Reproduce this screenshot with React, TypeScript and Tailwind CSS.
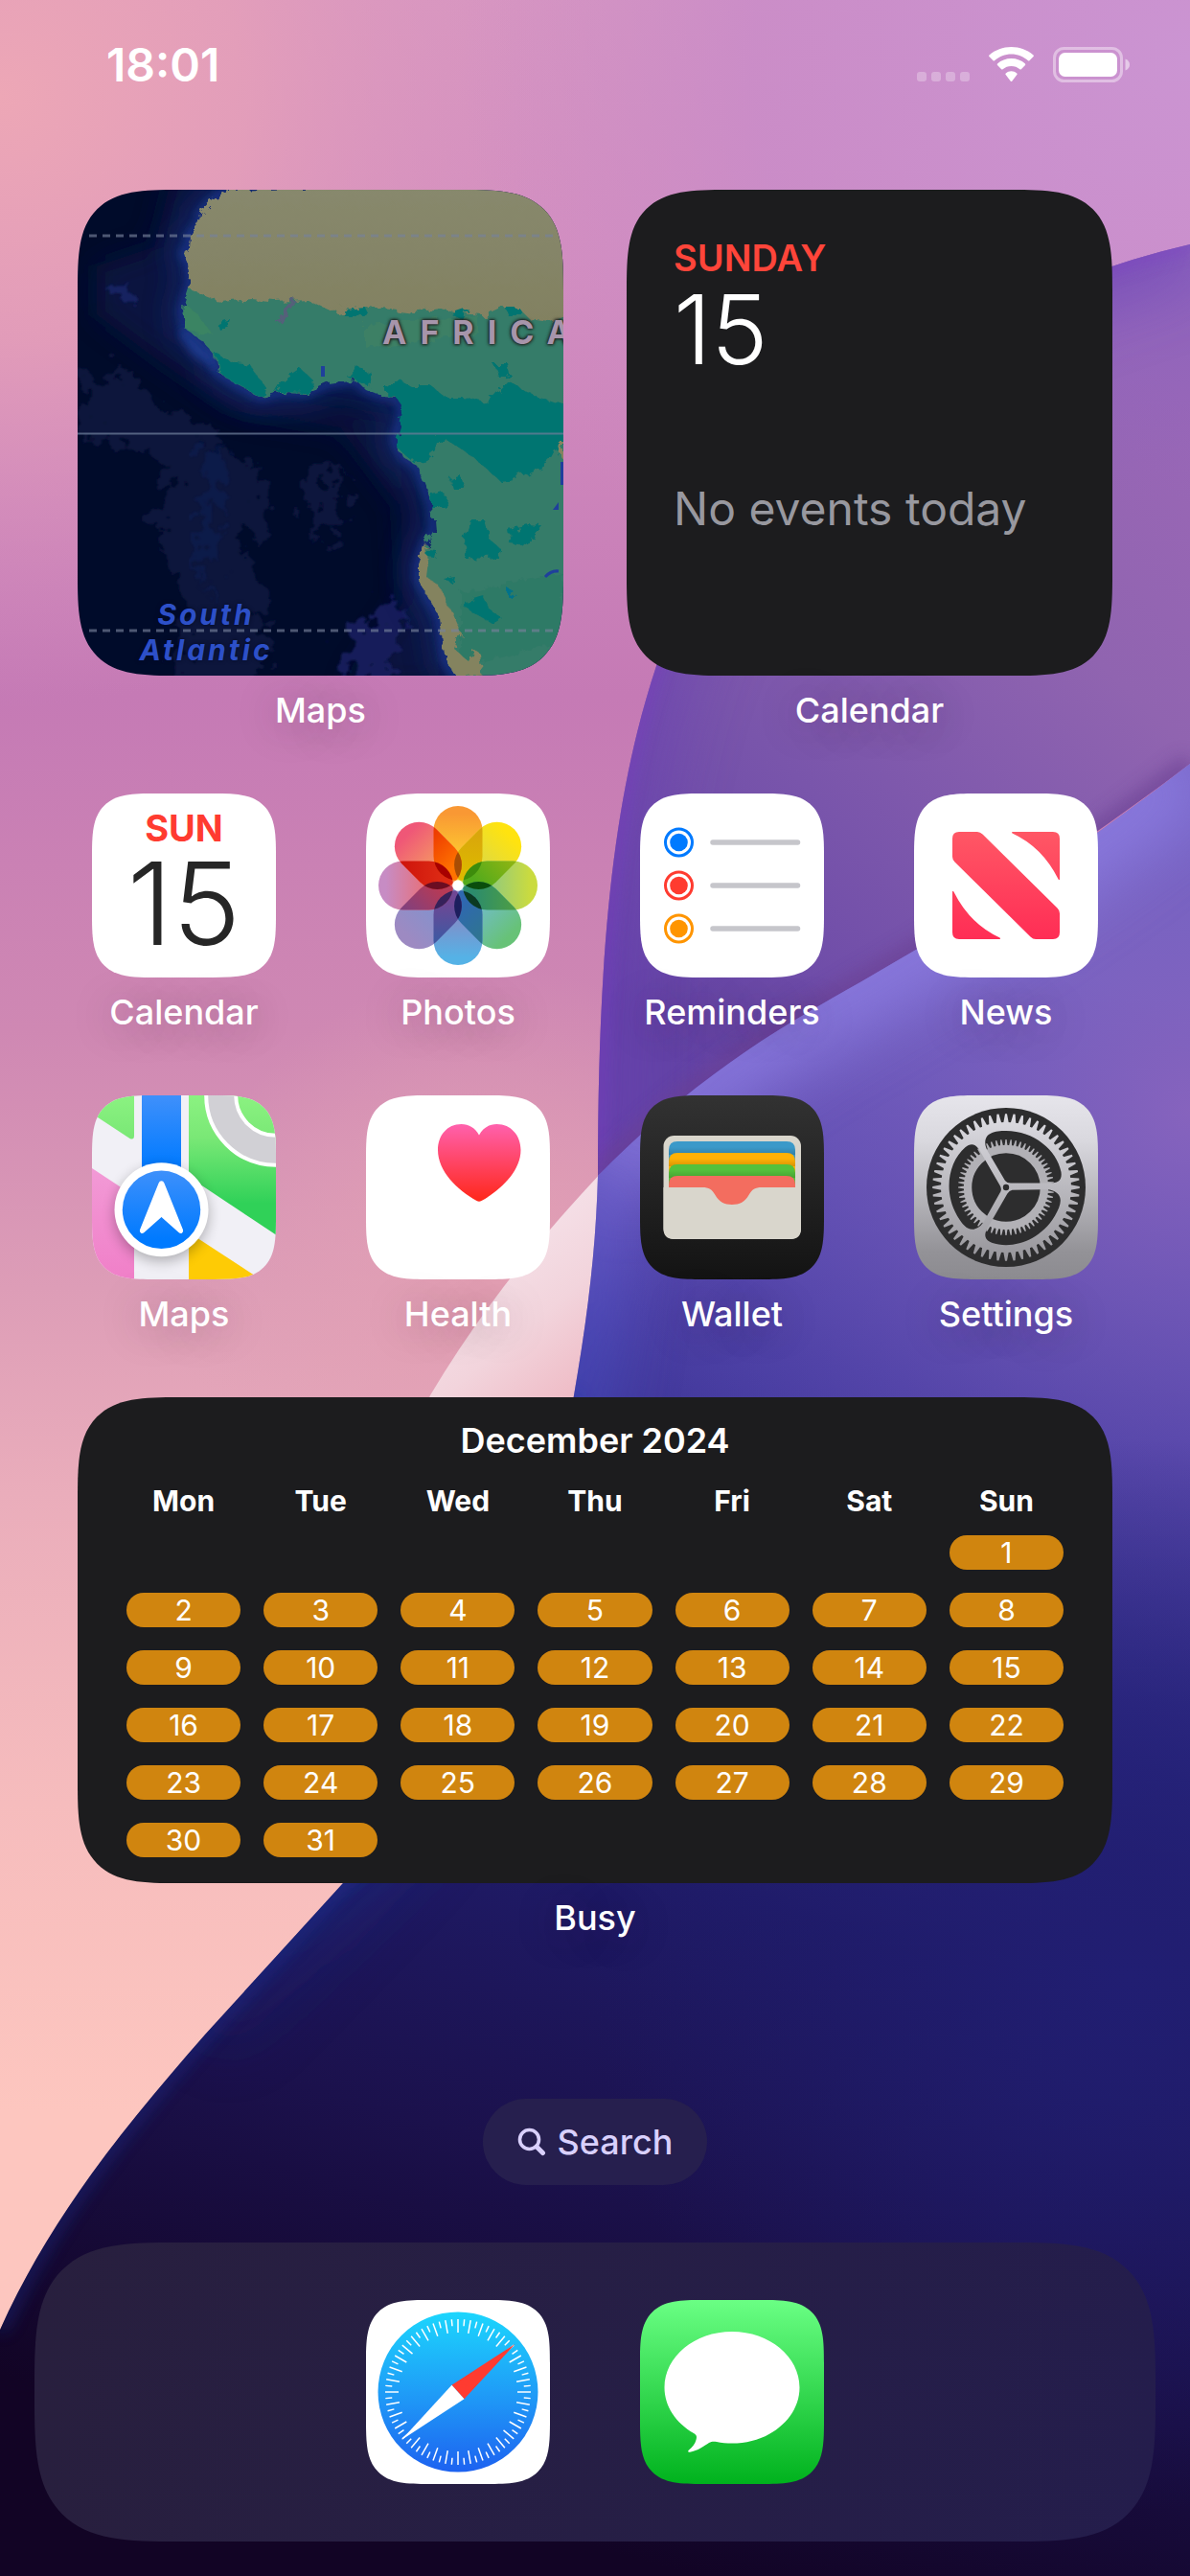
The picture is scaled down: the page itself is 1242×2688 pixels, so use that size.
import React from "react";

const FONT = "font-[Inter,'Liberation_Sans',sans-serif]";

const WEEKDAYS = ["Mon", "Tue", "Wed", "Thu", "Fri", "Sat", "Sun"];

const WEEKS: (number | null)[][] = [
  [null, null, null, null, null, null, 1],
  [2, 3, 4, 5, 6, 7, 8],
  [9, 10, 11, 12, 13, 14, 15],
  [16, 17, 18, 19, 20, 21, 22],
  [23, 24, 25, 26, 27, 28, 29],
  [30, 31, null, null, null, null, null],
];

function range(n: number) {
  return Array.from({ length: n }, (_, i) => i);
}

/* ---------- Wallpaper ---------- */

function Wallpaper() {
  return (
    <svg
      aria-hidden="true"
      className="absolute inset-0 h-full w-full"
      viewBox="0 0 1242 2688"
      preserveAspectRatio="none"
    >
      <defs>
        <linearGradient id="wpBase" x1="0" y1="0" x2="0" y2="1">
          <stop offset="0" stopColor="#d797c2" />
          <stop offset="0.1" stopColor="#d38ec0" />
          <stop offset="0.27" stopColor="#c57ab5" />
          <stop offset="0.4" stopColor="#cf88b3" />
          <stop offset="0.5" stopColor="#dd9db7" />
          <stop offset="0.58" stopColor="#eaadbb" />
          <stop offset="0.7" stopColor="#f6bcbd" />
          <stop offset="0.82" stopColor="#fdc6bf" />
        </linearGradient>
        <radialGradient id="wpPinkTop" gradientUnits="userSpaceOnUse" cx="0" cy="100" r="640">
          <stop offset="0" stopColor="#eda7b6" />
          <stop offset="0.4" stopColor="#e6a0b8" stopOpacity="0.8" />
          <stop offset="1" stopColor="#d38ec0" stopOpacity="0" />
        </radialGradient>
        <radialGradient id="wpLilac" gradientUnits="userSpaceOnUse" cx="1242" cy="60" r="760">
          <stop offset="0" stopColor="#cb94d2" />
          <stop offset="0.6" stopColor="#c88bc9" stopOpacity="0.8" />
          <stop offset="1" stopColor="#ca8ac4" stopOpacity="0" />
        </radialGradient>
        <radialGradient id="wpRose" gradientUnits="userSpaceOnUse" cx="520" cy="1340" r="330">
          <stop offset="0" stopColor="#e39fb3" />
          <stop offset="1" stopColor="#e0a0b5" stopOpacity="0" />
        </radialGradient>
        <linearGradient id="wpPurple" gradientUnits="userSpaceOnUse" x1="640" y1="1050" x2="1242" y2="420">
          <stop offset="0" stopColor="#6343a6" />
          <stop offset="0.35" stopColor="#7955ab" />
          <stop offset="0.7" stopColor="#9064b0" />
          <stop offset="1" stopColor="#9a67b6" />
        </linearGradient>
        <linearGradient id="wpPurpleTop" gradientUnits="userSpaceOnUse" x1="0" y1="240" x2="0" y2="520">
          <stop offset="0" stopColor="#8962c0" />
          <stop offset="1" stopColor="#9266bc" stopOpacity="0" />
        </linearGradient>
        <linearGradient id="wpWhite" gradientUnits="userSpaceOnUse" x1="480" y1="1300" x2="620" y2="1470">
          <stop offset="0" stopColor="#f6e4eb" />
          <stop offset="0.5" stopColor="#f2d4dc" />
          <stop offset="1" stopColor="#eeb5c0" />
        </linearGradient>
        <linearGradient id="wpBlue" gradientUnits="userSpaceOnUse" x1="900" y1="950" x2="420" y2="2600">
          <stop offset="0" stopColor="#8274d4" />
          <stop offset="0.12" stopColor="#6b58bc" />
          <stop offset="0.27" stopColor="#4b3fa4" />
          <stop offset="0.45" stopColor="#2d2a88" />
          <stop offset="0.6" stopColor="#1f1b68" />
          <stop offset="0.78" stopColor="#1b114c" />
          <stop offset="1" stopColor="#120425" />
        </linearGradient>
        <radialGradient id="wpMauve" gradientUnits="userSpaceOnUse" cx="1242" cy="1160" r="620">
          <stop offset="0" stopColor="#8763bd" stopOpacity="0.95" />
          <stop offset="0.5" stopColor="#6d55b4" stopOpacity="0.5" />
          <stop offset="1" stopColor="#5a4ab0" stopOpacity="0" />
        </radialGradient>
        <radialGradient id="wpNavy" gradientUnits="userSpaceOnUse" cx="1180" cy="2060" r="560">
          <stop offset="0" stopColor="#211e72" />
          <stop offset="1" stopColor="#1f1b68" stopOpacity="0" />
        </radialGradient>
        <linearGradient id="wpEdge" gradientUnits="userSpaceOnUse" x1="0" y1="1227" x2="0" y2="2123">
          <stop offset="0" stopColor="#7d70e2" />
          <stop offset="0.2" stopColor="#4a4fc4" />
          <stop offset="0.55" stopColor="#2440a4" />
          <stop offset="1" stopColor="#1c2f88" stopOpacity="0.3" />
        </linearGradient>
        <clipPath id="wpPurpleClip">
          <path d="M1242 255 C960 320 735 520 685 695 C640 830 624 990 624 1227 C760 1100 1000 980 1242 797 Z" />
        </clipPath>
        <clipPath id="wpBlueClip">
          <path d="M1242 797 C1090 915 985 975 854 1050 C760 1104 690 1160 624 1227 C622 1300 614 1370 599 1456 C560 1690 470 1850 358 1965 L214 2123 C120 2230 50 2320 0 2431 L0 2688 L1242 2688 Z" />
        </clipPath>
        <filter id="wpBlurS" x="-20%" y="-20%" width="140%" height="140%">
          <feGaussianBlur stdDeviation="9" />
        </filter>
        <filter id="wpBlurL" x="-30%" y="-30%" width="160%" height="160%">
          <feGaussianBlur stdDeviation="34" />
        </filter>
      </defs>
      <rect width="1242" height="2688" fill="url(#wpBase)" />
      <rect width="1242" height="900" fill="url(#wpPinkTop)" />
      <rect width="1242" height="900" fill="url(#wpLilac)" />
      <rect y="900" width="860" height="900" fill="url(#wpRose)" />
      <path
        d="M630 1221 C560 1295 500 1370 449 1456 L380 1620 L600 1620 L640 1400 Z"
        fill="url(#wpWhite)"
      />
      <g clipPath="url(#wpPurpleClip)">
        <rect x="560" y="200" width="700" height="1060" fill="url(#wpPurple)" />
        <rect x="560" y="200" width="700" height="400" fill="url(#wpPurpleTop)" />
        <path
          d="M1242 255 C960 320 735 520 685 695 C640 830 624 990 624 1227"
          fill="none"
          stroke="#6a41b4"
          strokeWidth="70"
          opacity="0.55"
          filter="url(#wpBlurL)"
        />
        <path
          d="M1242 255 C960 320 735 520 685 695 C640 830 624 990 624 1227"
          fill="none"
          stroke="#7d3cc4"
          strokeWidth="10"
          opacity="0.7"
          filter="url(#wpBlurS)"
        />
        <path
          d="M1242 797 C1090 915 985 975 854 1050 C760 1104 690 1160 624 1227"
          fill="none"
          stroke="#6b3f92"
          strokeWidth="22"
          opacity="0.65"
          filter="url(#wpBlurS)"
        />
      </g>
      <g clipPath="url(#wpBlueClip)">
        <rect y="780" width="1242" height="1908" fill="url(#wpBlue)" />
        <rect y="780" width="1242" height="1908" fill="url(#wpMauve)" />
        <rect y="780" width="1242" height="1908" fill="url(#wpNavy)" />
        <path
          d="M1242 797 C1090 915 985 975 854 1050 C760 1104 690 1160 624 1227"
          fill="none"
          stroke="#9080e6"
          strokeWidth="90"
          opacity="0.75"
          filter="url(#wpBlurL)"
        />
        <path
          d="M624 1227 C622 1300 614 1370 599 1456 C560 1690 470 1850 358 1965 L214 2123"
          fill="none"
          stroke="url(#wpEdge)"
          strokeWidth="70"
          opacity="0.65"
          filter="url(#wpBlurL)"
        />
        <path
          d="M599 1456 C560 1690 470 1850 358 1965 L214 2123 C120 2230 50 2320 0 2431"
          fill="none"
          stroke="#1c3aa8"
          strokeWidth="9"
          opacity="0.6"
          filter="url(#wpBlurS)"
        />
      </g>
    </svg>
  );
}

/* ---------- Status bar ---------- */

function StatusBar() {
  return (
    <header className="flex h-[136px] items-center justify-between pr-[63px] pl-[111px] text-white">
      <time className="text-[48px] leading-[64px] font-semibold">18:01</time>
      <svg width="222" height="38" viewBox="0 0 222 38" role="img" aria-label="No signal, Wi-Fi connected, battery full">
        {range(4).map((i) => (
          <rect key={i} x={i * 15} y="26" width="10" height="10" rx="3" fill="#fff" fillOpacity="0.28" />
        ))}
        <path
          fill="#fff"
          d="M98.500 7.600C105.100 7.600 111.200 10.100 116 14.300C116.400 14.700 117 14.700 117.400 14.300L121.600 10C122 9.600 122 8.900 121.500 8.500C115.300 3 107.300 0 98.500 0C89.800 0 81.700 3 75.500 8.500C75 8.900 75 9.600 75.400 10L79.600 14.300C80 14.700 80.600 14.700 81 14.300C85.800 10.100 91.900 7.600 98.500 7.600Z"
        />
        <path
          fill="#fff"
          d="M98.500 20C101.900 20 105 21.200 107.400 23.300C107.800 23.700 108.400 23.700 108.800 23.300L113 19C113.400 18.600 113.400 17.900 113 17.500C109 14 104 12.100 98.500 12.100C93 12.100 88 14 84 17.500C83.600 17.900 83.600 18.600 84 19L88.200 23.300C88.600 23.700 89.200 23.700 89.600 23.300C92 21.200 95.100 20 98.500 20Z"
        />
        <path
          fill="#fff"
          d="M104.700 28.100C104.700 28.400 104.600 28.700 104.300 28.900L99.200 35.800C98.800 36.200 98.200 36.200 97.800 35.800L92.700 28.900C92.300 28.500 92.300 27.800 92.800 27.400C94.400 26.100 96.400 25.300 98.500 25.300C100.600 25.300 102.600 26.100 104.200 27.400C104.500 27.600 104.700 27.900 104.700 28.100Z"
        />
        <rect x="143.500" y="1.500" width="70" height="34" rx="10" fill="none" stroke="#fff" strokeOpacity="0.42" strokeWidth="3" />
        <rect x="148" y="6" width="61" height="25" rx="6.500" fill="#fff" />
        <path d="M217.500 12.500C220.500 13.600 222 15.800 222 18.500C222 21.200 220.500 23.400 217.500 24.500Z" fill="#fff" fillOpacity="0.5" />
      </svg>
    </header>
  );
}

/* ---------- Widgets ---------- */

const WIDGET_SHAPE =
  "overflow-hidden rounded-[70px] supports-[corner-shape:squircle]:rounded-[106px] [corner-shape:superellipse(1.7)]";

function Label({ children }: { children: React.ReactNode }) {
  return (
    <span className="block text-center text-[36px] leading-[48px] font-medium whitespace-nowrap text-white [text-shadow:0_4px_40px_rgba(60,30,60,0.35)]">
      {children}
    </span>
  );
}

const LAND =
  "M156 0L141 11L129 24L128 36L117 47L116 60L110 66L116 78L118 97L109 125L112 145L129 156L143 173L145 189L168 204L191 216L211 211L238 212L261 202L290 198L300 208L315 214L331 215L340 227L336 246L331 261L338 277L354 288L363 311L370 330L372 355L363 370L356 391L356 407L366 426L378 447L381 472L384 491L394 507L520 520L520 -10Z";

function MapArtwork() {
  return (
    <svg aria-hidden="true" className="block h-full w-full" viewBox="0 0 507 507">
      <defs>
        <filter id="mapRough" x="-5%" y="-5%" width="110%" height="110%">
          <feTurbulence type="fractalNoise" baseFrequency="0.09" numOctaves="3" seed="4" />
          <feDisplacementMap in="SourceGraphic" scale="13" />
        </filter>
        <filter id="mapShard" x="-10%" y="-10%" width="120%" height="120%">
          <feTurbulence type="fractalNoise" baseFrequency="0.06" numOctaves="4" seed="11" />
          <feDisplacementMap in="SourceGraphic" scale="60" />
          <feGaussianBlur stdDeviation="1.2" />
        </filter>
        <filter id="mapBlur" x="-30%" y="-30%" width="160%" height="160%">
          <feGaussianBlur stdDeviation="14" />
        </filter>
        <filter id="mapBlurS" x="-20%" y="-20%" width="140%" height="140%">
          <feGaussianBlur stdDeviation="5" />
        </filter>
        <linearGradient id="mapDesert" x1="0" y1="0" x2="0" y2="1">
          <stop offset="0" stopColor="#88896e" />
          <stop offset="1" stopColor="#828161" />
        </linearGradient>
        <clipPath id="mapLandClip">
          <path d={LAND} />
        </clipPath>
      </defs>
      <rect width="507" height="507" fill="#000b2a" />
      <path d="M100 -20L170 -20L120 60L110 130L200 215L330 235L350 300L370 400L390 520L280 520L340 430L335 330L275 250L160 230L80 175L20 130L20 80L80 60Z" fill="#0f1643" opacity="0.9" filter="url(#mapBlur)" />
      <g filter="url(#mapShard)" fill="#0f153e">
        <path d="M10 200L60 190L80 225L150 250L130 270L190 285L200 340L170 380L200 420L190 520L100 520L110 430L80 350L100 290L60 270L0 260Z" opacity="0.9" />
        <path d="M240 300L280 290L275 350L245 370Z" />
        <path d="M35 98L60 100L58 120L40 116Z" fill="#122060" />
        <path d="M290 450L340 430L330 507L280 520Z" fill="#141b5a" />
      </g>
      <g filter="url(#mapShard)" fill="#11205a" opacity="0.45">
        <path d="M135 260L160 270L150 330L130 420L120 380L130 320Z" />
      </g>
      <path d={LAND} fill="none" stroke="#142a72" strokeWidth="28" opacity="0.75" filter="url(#mapBlur)" />
      <path d={LAND} fill="none" stroke="#2040a0" strokeWidth="7" opacity="0.8" filter="url(#mapBlurS)" />
      <path d="M112 145L143 173L145 189L120 172L105 150Z" fill="#1d3a8e" filter="url(#mapBlurS)" />
      <g filter="url(#mapRough)">
        <path d={LAND} fill="#367b69" transform="translate(1 1)" />
        <g clipPath="url(#mapLandClip)">
          <path d="M100 -12H520V128L493 138L472 135L461 124L443 122L424 131L397 129L379 124L350 128L304 122L272 130L240 115L207 117L182 114L150 117L117 104Z" fill="url(#mapDesert)" />
          <path d="M300 140L420 132L420 150L300 165Z" fill="#3c8065" />
          <path d="M400 420L507 400V470L400 500Z" fill="#2f7a66" />
          <path d="M110 118L124 128L140 150L112 146Z" fill="#3a8463" />
          <path d="M322 208L336 198L347 204L368 204L382 215L400 215L429 223L450 200L470 212L520 229V262L499 273L493 284L461 300L440 303L415 281L383 259L375 261L374 273L363 281L350 284L325 262Z" fill="#007471" />
          <path d="M145 172L165 180L180 182L195 205L192 220L165 206L148 190Z" fill="#007471" />
          <path d="M205 214L215 198L232 186L245 198L243 212Z" fill="#007471" />
          <path d="M282 196L290 186L306 190L304 206Z" fill="#007471" />
          <path d="M277 124L300 122L304 130L290 132L278 132Z" fill="#007471" />
          <path d="M390 130L408 124L402 136Z" fill="#007471" />
          <path d="M445 122L460 122L464 130L448 130Z" fill="#007471" />
          <path d="M146 140L160 136L158 142L148 146Z" fill="#007471" />
          <path d="M434 182L450 182L452 194L440 196Z" fill="#007471" />
          <path d="M410 345L425 345L430 365L442 375L440 385L404 384L402 370Z" fill="#007471" />
          <path d="M450 355L472 350L486 352L470 372L452 370Z" fill="#007471" />
          <path d="M368 320L382 316L386 326L370 334Z" fill="#007471" />
          <path d="M388 300L398 296L404 312L392 312Z" fill="#007471" />
          <path d="M404 430L424 424L432 440L442 446L432 452L404 436Z" fill="#007471" />
          <path d="M382 406L394 404L392 412Z" fill="#007471" />
          <path d="M448 415L456 420L448 424Z" fill="#00728a" />
          <path d="M366 375L374 376L372 384L366 383Z" fill="#007471" />
          <path d="M363 367L366 388L364 404L376 412L390 440L400 462L394 480L408 492L414 480L420 484L424 520L370 520L350 420L354 380Z" fill="#84835f" />
          <path d="M503 262L507 262V284L502 276Z" fill="#84835f" />
          <path d="M207 140L214 126L226 112L227 116L216 136Z" fill="#54607a" />
        </g>
      </g>
      <path d="M254 184h4v11h-4z M504 284h3v24h-3z M496 334l6 -8v8z" fill="#1f3f9c" />
      <path d="M488 404Q494 397 502 398" fill="none" stroke="#1f3f9c" strokeWidth="3" />
      <path d="M0 254.500H507" stroke="#6b7c98" strokeOpacity="0.75" strokeWidth="2" />
      <path d="M12 48H507M12 460H507" stroke="#76819b" strokeOpacity="0.65" strokeWidth="3" strokeDasharray="8 6" />
    </svg>
  );
}

function MapWidget() {
  return (
    <div className={`relative aspect-square w-full ${WIDGET_SHAPE}`}>
      <MapArtwork />
      <span className="absolute top-[128px] left-[318px] text-[34px] leading-[42px] font-bold tracking-[14px] whitespace-nowrap text-[#a795ab] [text-shadow:0_0_3px_#222,0_0_3px_#222,0_0_4px_#222]">
        AFRICA
      </span>
      <span className="absolute bottom-[8px] left-[56px] w-[156px] text-center text-[30px] leading-[37px] font-bold tracking-[3px] text-[#2d50c8] italic [text-shadow:0_0_4px_#020a24]">
        South Atlantic
      </span>
    </div>
  );
}

function AgendaWidget() {
  return (
    <div className={`flex aspect-square w-full flex-col bg-[#1c1c1e] px-[49px] pt-[48px] ${WIDGET_SHAPE}`}>
      <span className="text-[38px] leading-[46px] font-semibold text-[#ff453a]">SUNDAY</span>
      <span className="text-[100px] leading-[104px] font-light text-white">15</span>
      <span className="mt-[105px] text-[48px] leading-[60px] whitespace-nowrap text-[#98989f]">No events today</span>
    </div>
  );
}

function BusyWidget() {
  return (
    <div className={`flex w-full flex-col items-center bg-[#1c1c1e] px-[39px] pt-[21px] pb-[15px] text-white ${WIDGET_SHAPE}`}>
      <h2 id="busy-month" className="text-[36px] leading-[48px] font-semibold">
        December 2024
      </h2>
      <table aria-labelledby="busy-month" className="mt-[15px] w-full table-fixed border-collapse">
        <thead>
          <tr>
            {WEEKDAYS.map((d) => (
              <th key={d} scope="col" className="p-0 text-center text-[30px] leading-[48px] font-bold">
                {d}
              </th>
            ))}
          </tr>
        </thead>
        <tbody>
          {WEEKS.map((week, i) => (
            <tr key={i} className="h-[60px]">
              {week.map((day, j) => (
                <td key={j} className="px-3 py-3 text-center">
                  {day !== null && (
                    <span className="block rounded-full bg-[#d0850f] text-[30px] leading-[36px]">{day}</span>
                  )}
                </td>
              ))}
            </tr>
          ))}
        </tbody>
      </table>
    </div>
  );
}

/* ---------- App icons ---------- */

function CalendarIcon() {
  return (
    <span className="flex h-full flex-col items-center bg-white pt-4">
      <span className="text-[38px] leading-[40px] font-bold text-[#ff3b30]">SUN</span>
      <span className="text-[120px] leading-[118px] font-light text-[#262626]">15</span>
    </span>
  );
}

/* Petals run clockwise from the top: outer tint, inner tint. */
const PETALS: [string, string][] = [
  ["#f99834", "#fdd02f"],
  ["#ffe30f", "#d9d84a"],
  ["#cadb3f", "#86c68a"],
  ["#67c277", "#72bcd0"],
  ["#55b2e6", "#8a86c2"],
  ["#9d8ac2", "#7f93cf"],
  ["#c78cc4", "#ee6a6a"],
  ["#ef5777", "#f6a060"],
];

/* Tint where petal i crosses petal i + 1, outer end then inner end. */
const CROSSINGS: [string, string][] = [
  ["#d9a50c", "#dcb800"],
  ["#8ab413", "#52aa1c"],
  ["#4a9c48", "#2c8c6c"],
  ["#2f7590", "#2f68b0"],
  ["#4058a2", "#6f4794"],
  ["#83407c", "#b63a56"],
  ["#cf160c", "#dd2a14"],
  ["#ee3d00", "#ff7300"],
];

/* Tint where petal i crosses petal i + 2. */
const CORES = ["#3d8c0c", "#0a4d0c", "#0b3a22", "#1d1f5e", "#36215a", "#6b0d22", "#a80000", "#a84d04"];

function PhotosIcon() {
  return (
    <svg viewBox="0 0 192 192" className="block h-full w-full bg-white">
      <defs>
        {PETALS.map(([a, b], i) => (
          <React.Fragment key={i}>
            <linearGradient id={`petal${i}`} x1="0" y1="0" x2="0" y2="1">
              <stop offset="0.1" stopColor={a} />
              <stop offset="0.75" stopColor={b} />
            </linearGradient>
            <linearGradient id={`cross${i}`} x1="0" y1="0" x2="0" y2="1">
              <stop offset="0.35" stopColor={CROSSINGS[i][0]} />
              <stop offset="0.85" stopColor={CROSSINGS[i][1]} />
            </linearGradient>
            <clipPath id={`petalClip${i}`}>
              <rect x="70.500" y="13" width="51" height="78" rx="25.500" transform={`rotate(${i * 45} 96 96)`} />
            </clipPath>
          </React.Fragment>
        ))}
      </defs>
      {PETALS.map((_, i) => (
        <rect
          key={i}
          x="70.500"
          y="13"
          width="51"
          height="78"
          rx="25.500"
          fill={`url(#petal${i})`}
          transform={`rotate(${i * 45} 96 96)`}
        />
      ))}
      {CROSSINGS.map((_, i) => (
        <g key={i} clipPath={`url(#petalClip${(i + 1) % 8})`}>
          <rect
            x="70.500"
            y="13"
            width="51"
            height="78"
            rx="25.500"
            fill={`url(#cross${i})`}
            transform={`rotate(${i * 45} 96 96)`}
          />
        </g>
      ))}
      {CORES.map((c, i) => (
        <g key={i} clipPath={`url(#petalClip${(i + 2) % 8})`}>
          <rect
            x="70.500"
            y="13"
            width="51"
            height="78"
            rx="25.500"
            fill={c}
            transform={`rotate(${i * 45} 96 96)`}
          />
        </g>
      ))}
      <circle cx="96" cy="96" r="5.800" fill="#fff" />
    </svg>
  );
}

function RemindersIcon() {
  return (
    <svg viewBox="0 0 192 192" className="block h-full w-full bg-white">
      {["#007aff", "#ff3b30", "#ff9500"].map((c, i) => (
        <g key={c} transform={`translate(0 ${51 + i * 45})`}>
          <circle cx="40.500" cy="0" r="14" fill="none" stroke={c} strokeWidth="3" />
          <circle cx="40.500" cy="0" r="9.300" fill={c} />
          <path d="M76 0H164.500" stroke="#c6c6cb" strokeWidth="5.500" strokeLinecap="round" />
        </g>
      ))}
    </svg>
  );
}

function NewsIcon() {
  return (
    <svg viewBox="0 0 192 192" className="block h-full w-full bg-white">
      <defs>
        <linearGradient id="news" gradientUnits="userSpaceOnUse" x1="0" y1="40" x2="0" y2="152">
          <stop offset="0" stopColor="#ff5765" />
          <stop offset="1" stopColor="#ff2d55" />
        </linearGradient>
      </defs>
      <g fill="url(#news)">
        <path d="M47 40H66Q69 40 71.500 42.500L149.500 119.500Q152 122 152 125V145Q152 152 145 152H127Q124 152 121.500 149.500L42.500 71.500Q40 69 40 66V47Q40 40 47 40Z" />
        <path d="M102.500 40H145Q152 40 152 47V89.500Q151.500 91 150.600 89.500Q134 56 102.500 41.500Q101.500 40.500 102.500 40Z" />
        <path d="M89.500 152H47Q40 152 40 145V102.500Q40.500 101 41.400 102.500Q58 136 89.500 150.500Q90.500 151.500 89.500 152Z" />
      </g>
    </svg>
  );
}

function MapsIcon() {
  return (
    <svg viewBox="0 0 192 192" className="block h-full w-full bg-[#f1f0f6]">
      <defs>
        <linearGradient id="mGreen" gradientUnits="userSpaceOnUse" x1="0" y1="0" x2="0" y2="125">
          <stop offset="0" stopColor="#8bf281" />
          <stop offset="0.35" stopColor="#7ae876" />
          <stop offset="0.9" stopColor="#30d158" />
        </linearGradient>
        <linearGradient id="mBlue" gradientUnits="userSpaceOnUse" x1="0" y1="0" x2="0" y2="75">
          <stop offset="0" stopColor="#3f90fb" />
          <stop offset="1" stopColor="#007aff" />
        </linearGradient>
        <linearGradient id="mDisc" gradientUnits="userSpaceOnUse" x1="0" y1="79" x2="0" y2="150">
          <stop offset="0" stopColor="#3d90fb" />
          <stop offset="1" stopColor="#007aff" />
        </linearGradient>
        <linearGradient id="mPink" gradientUnits="userSpaceOnUse" x1="0" y1="76" x2="0" y2="192">
          <stop offset="0" stopColor="#f29ad6" />
          <stop offset="1" stopColor="#f07fc8" />
        </linearGradient>
        <filter id="mShadow" x="-30%" y="-30%" width="160%" height="160%">
          <feGaussianBlur stdDeviation="7" />
        </filter>
      </defs>
      <path d="M0 0H44V42Q44 47 39.500 45L0 19Z" fill="url(#mGreen)" />
      <path d="M101 0H192V145.500L101 85Z" fill="url(#mGreen)" />
      <path d="M0 76L44 105V192H0Z" fill="url(#mPink)" />
      <path d="M101 143L176 192H101Z" fill="#fecb05" />
      <rect x="52" y="0" width="41" height="90" fill="url(#mBlue)" />
      <circle cx="192" cy="0" r="57.300" fill="none" stroke="#fff" strokeWidth="35" />
      <circle cx="192" cy="0" r="57.300" fill="none" stroke="#d1d0d5" strokeWidth="27" />
      <circle cx="72.500" cy="124" r="49" fill="#000" opacity="0.28" filter="url(#mShadow)" />
      <circle cx="72.500" cy="119.300" r="49" fill="#fff" />
      <circle cx="72.500" cy="119.300" r="40.700" fill="url(#mDisc)" />
      <path
        d="M72.500 126L54 142.500Q52.500 143.800 51.400 142.900Q50.200 142 50.900 140L70.200 92Q71 90 72.500 90Q74 90 74.800 92L94.100 140Q94.800 142 93.600 142.900Q92.500 143.800 91 142.500Z"
        fill="#fff"
        stroke="#fff"
        strokeWidth="1.500"
        strokeLinejoin="round"
      />
    </svg>
  );
}

function HealthIcon() {
  return (
    <svg viewBox="0 0 192 192" className="block h-full w-full bg-white">
      <defs>
        <linearGradient id="heart" x1="0" y1="0" x2="0" y2="1">
          <stop offset="0" stopColor="#ff61ad" />
          <stop offset="1" stopColor="#ff2719" />
        </linearGradient>
      </defs>
      <path
        d="M118 41.500C114 34 107.500 30 99.500 30C84.500 30 75 42 75 57C75 79 95 98.500 115.500 110Q118 111.400 120.500 110C141 98.500 161.500 79 161.500 57C161.500 42 151.500 30 136.500 30C128.500 30 122 34 118 41.500Z"
        fill="url(#heart)"
      />
    </svg>
  );
}

function WalletIcon() {
  const cards = ["#3b99c9", "#ffb106", "#54c13c", "#f36d5f"];
  return (
    <svg viewBox="0 0 192 192" className="block h-full w-full">
      <defs>
        <linearGradient id="wBg" x1="0" y1="0" x2="0" y2="1">
          <stop offset="0" stopColor="#323232" />
          <stop offset="1" stopColor="#131313" />
        </linearGradient>
        <linearGradient id="wShade" x1="0" y1="0" x2="0" y2="1">
          <stop offset="0" stopColor="#000" stopOpacity="0" />
          <stop offset="1" stopColor="#000" stopOpacity="0.16" />
        </linearGradient>
      </defs>
      <rect width="192" height="192" fill="url(#wBg)" />
      <rect x="24.500" y="42" width="143.500" height="108" rx="11" fill="#d9d6cc" />
      {cards.map((c, i) => (
        <g key={c}>
          <path d={`M30 ${57 + i * 12}Q30 ${48 + i * 12} 39 ${48 + i * 12}H153Q162 ${48 + i * 12} 162 ${57 + i * 12}V118H30Z`} fill={c} />
          {i < 3 && <rect x="30" y={54 + i * 12} width="132" height="8" fill="url(#wShade)" />}
        </g>
      ))}
      <path
        d="M24.500 96H65C72 96 75 98 78.500 104C82.500 111 88 114 96 114C104 114 109.500 111 113.500 104C117 98 120 96 127 96H168V139Q168 150 157 150H35.500Q24.500 150 24.500 139Z"
        fill="#d9d6cc"
      />
    </svg>
  );
}

function SettingsIcon() {
  return (
    <svg viewBox="0 0 192 192" className="block h-full w-full">
      <defs>
        <linearGradient id="sBg" gradientUnits="userSpaceOnUse" x1="0" y1="0" x2="0" y2="192">
          <stop offset="0" stopColor="#e6e5eb" />
          <stop offset="0.25" stopColor="#d9d8de" />
          <stop offset="0.85" stopColor="#939297" />
          <stop offset="1" stopColor="#8c8b90" />
        </linearGradient>
        <linearGradient id="sGear" gradientUnits="userSpaceOnUse" x1="0" y1="20" x2="0" y2="172">
          <stop offset="0" stopColor="#dddce2" />
          <stop offset="1" stopColor="#97969b" />
        </linearGradient>
        <mask id="sTeeth">
          <circle cx="96" cy="96" r="68" fill="#fff" />
          {range(56).map((i) => (
            <path key={i} d="M93 30L95 19.200H97L99 30Z" fill="#fff" transform={`rotate(${(i * 360) / 56} 96 96)`} />
          ))}
          {range(3).map((i) => (
            <g key={i} transform={`rotate(${i * 120} 96 96)`}>
              <path
                d="M101 91.500H142C152 91.500 154.500 87 153.500 80C149 57 125 37 96 37C84 37 74 39 74.300 50C74.300 54 77 58.500 78.500 61L95 89Q97 91.500 101 91.500Z"
                fill="#000"
              />
            </g>
          ))}
        </mask>
      </defs>
      <rect width="192" height="192" fill="url(#sBg)" />
      <circle cx="96" cy="96" r="83" fill="#2d2d2e" />
      <g fill="#b2b1b6">
        {range(60).map((i) => (
          <path key={i} d="M94.300 54L95.400 46H96.600L97.700 54Z" transform={`rotate(${i * 6} 96 96)`} />
        ))}
      </g>
      <circle cx="96" cy="96" r="40" fill="none" stroke="#b2b1b6" strokeWidth="8.500" />
      <rect width="192" height="192" fill="url(#sGear)" mask="url(#sTeeth)" />
      <circle cx="96" cy="96" r="3.200" fill="#2d2d2e" />
    </svg>
  );
}

function SafariIcon() {
  return (
    <svg viewBox="0 0 192 192" className="block h-full w-full bg-white">
      <defs>
        <linearGradient id="safari" x1="0" y1="0" x2="0" y2="1">
          <stop offset="0" stopColor="#1cd6fd" />
          <stop offset="0.5" stopColor="#1f9df7" />
          <stop offset="1" stopColor="#1d62f0" />
        </linearGradient>
      </defs>
      <circle cx="96" cy="96" r="83.500" fill="url(#safari)" />
      <g stroke="#fff" strokeWidth="1.500">
        {range(72).map((i) => (
          <path key={i} d={i % 2 ? "M96 20V27" : "M96 20V34"} transform={`rotate(${i * 5} 96 96)`} />
        ))}
      </g>
      <path d="M155.500 46L102.500 103.300L89.500 88.700Z" fill="#ff3b30" />
      <path d="M37 146L89.500 88.700L102.500 103.300Z" fill="#fff" />
    </svg>
  );
}

function MessagesIcon() {
  return (
    <svg viewBox="0 0 192 192" className="block h-full w-full">
      <defs>
        <linearGradient id="messages" x1="0" y1="0" x2="0" y2="1">
          <stop offset="0" stopColor="#6aff84" />
          <stop offset="1" stopColor="#00b21d" />
        </linearGradient>
      </defs>
      <rect width="192" height="192" fill="url(#messages)" />
      <path
        fill="#fff"
        d="M96 33C57 33 25.500 59 25.500 91.300C25.500 111 37.500 128.500 56 139C59.500 141 59.300 143 58.500 146C57.500 150 54.500 153.500 51 156.500C49.500 158 50 159 52 158.700C60 157.500 67.500 152 72 149C74.500 147.500 77 147.500 80 148C85 149 90.500 149.600 96 149.600C135 149.600 166.500 123.500 166.500 91.300C166.500 59 135 33 96 33Z"
      />
    </svg>
  );
}

const ICON_SHAPE =
  "block size-48 overflow-hidden rounded-[43px] supports-[corner-shape:squircle]:rounded-[66px] [corner-shape:superellipse(1.7)]";

function AppButton({ name, labelled = true, children }: { name: string; labelled?: boolean; children: React.ReactNode }) {
  return (
    <button type="button" aria-label={name} className="flex w-48 flex-col items-center gap-3">
      <span className={ICON_SHAPE}>{children}</span>
      {labelled && <Label>{name}</Label>}
    </button>
  );
}

export default function App() {
  return (
    <div className={`relative isolate flex min-h-screen w-full flex-col overflow-hidden bg-[#1a1049] ${FONT}`}>
      <div className="absolute inset-0 -z-10">
        <Wallpaper />
      </div>
      <StatusBar />
      <main className="flex flex-col gap-[63px] px-[81px] pt-[62px]">
        <section className="grid grid-cols-2 gap-[66px]">
          <div className="flex flex-col gap-3">
            <MapWidget />
            <Label>Maps</Label>
          </div>
          <div className="flex flex-col gap-3">
            <AgendaWidget />
            <Label>Calendar</Label>
          </div>
        </section>
        <div className="flex justify-between px-[15px]">
          <AppButton name="Calendar"><CalendarIcon /></AppButton>
          <AppButton name="Photos"><PhotosIcon /></AppButton>
          <AppButton name="Reminders"><RemindersIcon /></AppButton>
          <AppButton name="News"><NewsIcon /></AppButton>
        </div>
        <div className="flex justify-between px-[15px]">
          <AppButton name="Maps"><MapsIcon /></AppButton>
          <AppButton name="Health"><HealthIcon /></AppButton>
          <AppButton name="Wallet"><WalletIcon /></AppButton>
          <AppButton name="Settings"><SettingsIcon /></AppButton>
        </div>
        <section className="flex flex-col gap-3">
          <BusyWidget />
          <Label>Busy</Label>
        </section>
      </main>
      <div className="mt-auto flex flex-col items-center gap-[60px] px-9 pt-[60px] pb-9">
        <button
          type="button"
          className="flex h-[90px] items-center gap-3 rounded-full bg-[#261f4e] px-9 text-[36px] leading-[48px] font-medium text-[#d9d0fc]"
        >
          <svg aria-hidden="true" width="30" height="30" viewBox="0 0 30 30" fill="none" stroke="currentColor">
            <circle cx="12.500" cy="12.500" r="10" strokeWidth="3.600" />
            <path d="M20 20L26.500 26.500" strokeWidth="5" strokeLinecap="round" />
          </svg>
          Search
        </button>
        <nav
          aria-label="Dock"
          className="flex w-full justify-center gap-[94px] rounded-[100px] bg-gradient-to-r from-[#281f3e] to-[#241d4c] py-[60px] supports-[corner-shape:squircle]:rounded-[150px] [corner-shape:superellipse(1.7)]"
        >
          <AppButton name="Safari" labelled={false}><SafariIcon /></AppButton>
          <AppButton name="Messages" labelled={false}><MessagesIcon /></AppButton>
        </nav>
      </div>
    </div>
  );
}
